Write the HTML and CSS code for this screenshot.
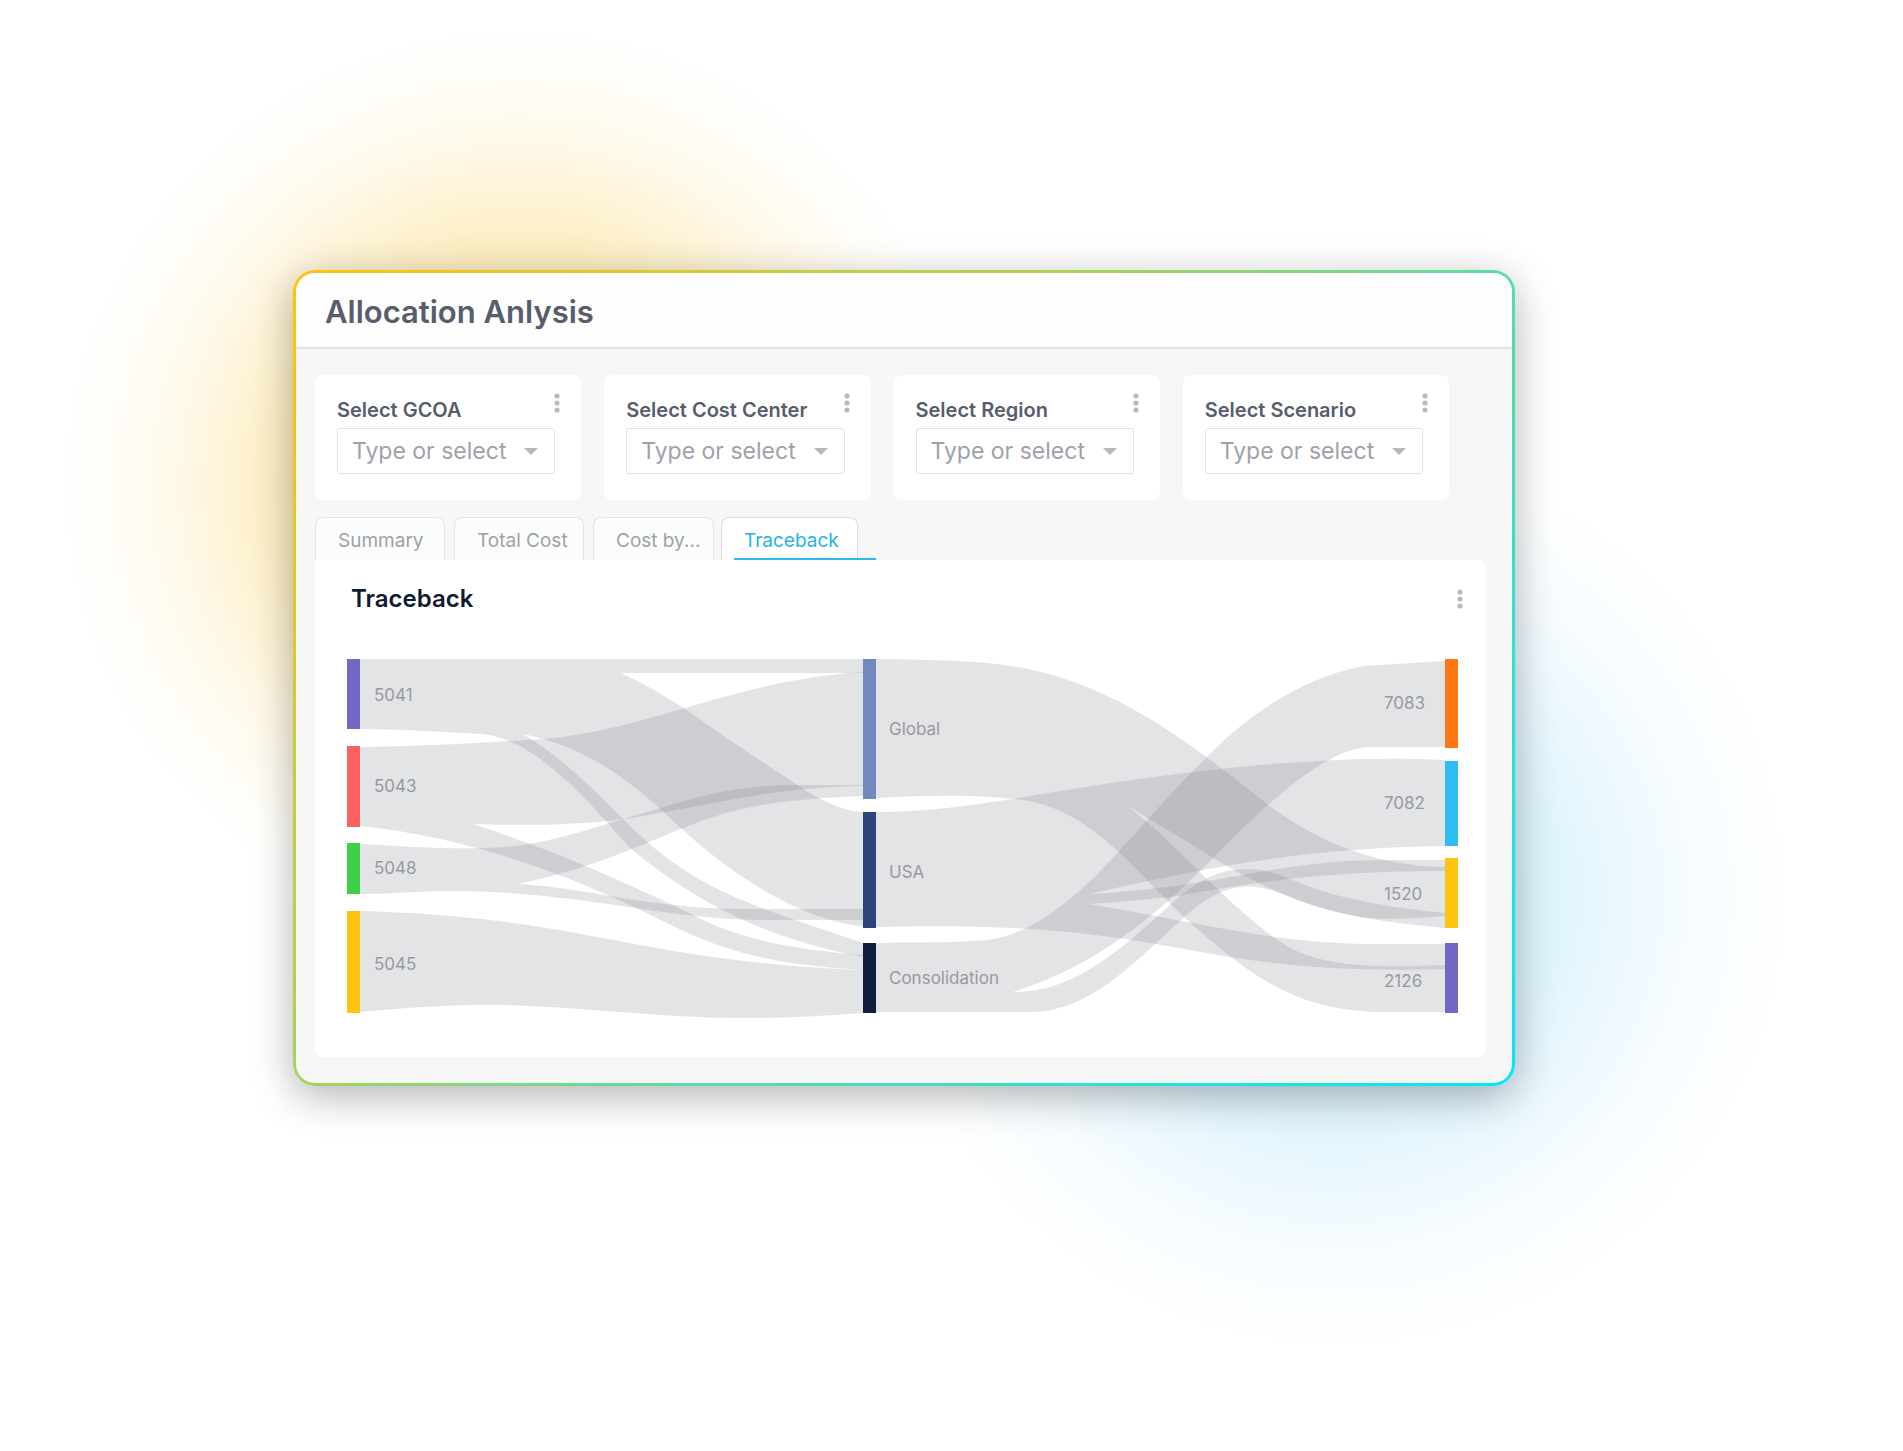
FILE: index.html
```
<!DOCTYPE html>
<html lang="en">
<head>
  <meta charset="UTF-8">
  <meta name="viewport" content="width=device-width, initial-scale=1.0">
  <title>Allocation Anlysis</title>
  <link rel="stylesheet" href="styles.css">
</head>
<body>
  <main class="window">
    <header class="window-header">
      <h1>Allocation Anlysis</h1>
    </header>

    <div class="content">
      <div class="filters">
        <div class="filter">
          <label for="gcoa">Select GCOA</label>
          <div class="select-box">
            <select id="gcoa"><option>Type or select</option></select>
          </div>
          <button class="more" aria-label="GCOA options">
            <svg width="6" height="20" viewBox="0 0 6 20"><circle cx="3" cy="3" r="2.6"/><circle cx="3" cy="10" r="2.6"/><circle cx="3" cy="17" r="2.6"/></svg>
          </button>
        </div>
        <div class="filter">
          <label for="cost-center">Select Cost Center</label>
          <div class="select-box">
            <select id="cost-center"><option>Type or select</option></select>
          </div>
          <button class="more" aria-label="Cost center options">
            <svg width="6" height="20" viewBox="0 0 6 20"><circle cx="3" cy="3" r="2.6"/><circle cx="3" cy="10" r="2.6"/><circle cx="3" cy="17" r="2.6"/></svg>
          </button>
        </div>
        <div class="filter">
          <label for="region">Select Region</label>
          <div class="select-box">
            <select id="region"><option>Type or select</option></select>
          </div>
          <button class="more" aria-label="Region options">
            <svg width="6" height="20" viewBox="0 0 6 20"><circle cx="3" cy="3" r="2.6"/><circle cx="3" cy="10" r="2.6"/><circle cx="3" cy="17" r="2.6"/></svg>
          </button>
        </div>
        <div class="filter">
          <label for="scenario">Select Scenario</label>
          <div class="select-box">
            <select id="scenario"><option>Type or select</option></select>
          </div>
          <button class="more" aria-label="Scenario options">
            <svg width="6" height="20" viewBox="0 0 6 20"><circle cx="3" cy="3" r="2.6"/><circle cx="3" cy="10" r="2.6"/><circle cx="3" cy="17" r="2.6"/></svg>
          </button>
        </div>
      </div>

      <nav class="tabs">
        <button class="tab">Summary</button>
        <button class="tab">Total Cost</button>
        <button class="tab tab-small">Cost by...</button>
        <button class="tab active">Traceback</button>
      </nav>

      <section class="panel">
        <div class="panel-header">
          <h2>Traceback</h2>
          <button class="more" aria-label="Chart options">
            <svg width="6" height="20" viewBox="0 0 6 20"><circle cx="3" cy="3" r="2.6"/><circle cx="3" cy="10" r="2.6"/><circle cx="3" cy="17" r="2.6"/></svg>
          </button>
        </div>

        <svg class="sankey" viewBox="0 0 1111 362" role="img" aria-label="Cost flow between accounts and regions">
          <!-- accounts to regions -->
          <g class="flows">
            <path d="M13 0 H516 V14 H274 C296 24 317 36 338 50 C376 77 414 102 452 127 C475 142 495 152 516 153 V267 C470 264 400 230 336 171 C293 131 250 90 176 75 C199 89 219 105 236 121 C258 141 277 162 299 182 C357 233 412 249 516 284 V298 C451 285 372 263 283 189 C243 144 190 81 136 75 C96 73 50 70 13 70 Z"/>
            <path d="M13 88 C95 87 145 83 198 80 C245 76 293 62 338 49 C390 34 442 18 516 13 V127 C440 128 390 140 313 154 C265 163 220 168 126 165 C190 185 260 215 328 247 C360 262 390 286 516 296 V311 C440 306 390 298 328 268 C265 236 150 181 13 167 Z"/>
            <path d="M13 185 C80 189 110 190 136 189 C195 189 250 167 293 155 C350 138 385 126 450 126 H516 V137 C420 141 385 150 336 169 C283 191 235 212 170 225 C240 228 300 250 400 250 H516 V261 H410 C310 259 230 232 103 232 C70 232 50 235 13 235 Z"/>
            <path d="M13 252 C240 258 285 302 516 311 V354 C400 363 345 358 286 354 C200 348 150 340 13 353 Z"/>
          </g>
          <!-- regions to targets -->
          <g class="flows">
            <path d="M529 0 C600 1 650 2 690 12 C780 34 850 89 920 145 C955 170 1010 206 1098 208 V257 C1060 260 1030 261 1013 258 C980 252 955 243 933 234 C910 224 890 213 866 199 C838 181 810 165 781 147 C835 190 865 231 926 278 C962 304 1000 310 1098 306 V353 H1030 C945 350 900 315 836 257 C790 214 740 144 666 140 C630 136 590 136 529 139 Z"/>
            <path d="M529 153 C575 153 620 147 666 140 C770 122 950 93 1098 101 V187 C960 189 870 206 742 235 C880 227 930 201 1036 201 H1098 V212 C960 212 900 226 823 238 C795 241 770 243 742 245 C860 265 930 285 1030 285 H1098 V310 C960 314 900 301 820 287 C740 272 660 265 529 268 Z"/>
            <path d="M529 284 C570 283 610 284 640 281 C690 276 740 228 773 191 C804 157 830 127 860 98 C905 51 960 18 1016 7 L1098 2 V88 H1020 C975 93 925 140 866 199 C812 254 750 307 666 333 C720 334 765 300 825 244 C845 226 868 210 900 210 C945 210 950 240 1098 254 V269 C1065 266 1035 262 1013 258 C980 252 955 243 933 234 C903 223 878 224 843 253 C790 300 745 353 683 353 H529 Z"/>
          </g>

          <rect x="0" y="0" width="13" height="70" fill="#7367c5"/>
          <rect x="0" y="87" width="13" height="81" fill="#ff6161"/>
          <rect x="0" y="184" width="13" height="51" fill="#3fd04a"/>
          <rect x="0" y="252" width="13" height="102" fill="#fcc30f"/>
          <rect x="516" y="0" width="13" height="140" fill="#718abe"/>
          <rect x="516" y="153" width="13" height="116" fill="#2b447a"/>
          <rect x="516" y="284" width="13" height="70" fill="#101f3e"/>
          <rect x="1098" y="0" width="13" height="89" fill="#ff7715"/>
          <rect x="1098" y="102" width="13" height="85" fill="#2fbcf2"/>
          <rect x="1098" y="199" width="13" height="70" fill="#fcc30f"/>
          <rect x="1098" y="284" width="13" height="70" fill="#7367c5"/>

          <g class="labels">
            <text x="27" y="42">5041</text>
            <text x="27" y="133">5043</text>
            <text x="27" y="215">5048</text>
            <text x="27" y="311">5045</text>
            <text x="542" y="76">Global</text>
            <text x="542" y="219">USA</text>
            <text x="542" y="325">Consolidation</text>
            <text x="1037" y="50">7083</text>
            <text x="1037" y="150">7082</text>
            <text x="1037" y="241">1520</text>
            <text x="1037" y="328">2126</text>
          </g>
        </svg>
      </section>
    </div>
  </main>
</body>
</html>
```

FILE: styles.css
```
* {
  margin: 0;
  padding: 0;
  box-sizing: border-box;
}
body {
  min-height: 100vh;
  padding: 270px 388px 120px 293px;
  font-family: Inter, "Liberation Sans", sans-serif;
  color: #575d6b;
  background:
    radial-gradient(circle 460px at 520px 485px, #fbe7ae 0%, #fcedc0 50%, #fdf2d2 61%, #fff7e4 71%, #fffbf1 82%, #fffefa 92%, rgba(255, 255, 255, 0) 100%),
    radial-gradient(circle 455px at 1335px 895px, #c8edfb 0%, #e1f5fd 51%, #ebf8fe 62%, #f5fbff 76%, #fbfeff 89%, rgba(255, 255, 255, 0) 100%),
    #fff;
}
button {
  border: none;
  background: none;
  font-family: inherit;
  cursor: pointer;
}
.window {
  border: 3px solid transparent;
  border-radius: 22px;
  background:
    linear-gradient(#f7f7f7, #f7f7f7) padding-box,
    linear-gradient(135deg, #ffc20e 0%, #a8d35a 40%, #57dca8 60%, #00e8ff 100%) border-box;
  box-shadow: 0 10px 40px rgba(0, 0, 0, 0.3);
}
.window-header {
  height: 76px;
  padding: 4px 29px 0;
  display: flex;
  align-items: center;
  background: #fefefe;
  border-bottom: 2px solid #dce4f0;
  border-radius: 19px 19px 0 0;
}
.window-header h1 {
  font-size: 31px;
  line-height: 38px;
  font-weight: 600;
}
.content {
  padding: 26px 26px 26px 19px;
}
.filters {
  display: grid;
  grid-template-columns: repeat(4, 1fr);
  gap: 23px;
  margin-right: 37px;
}
.filter {
  position: relative;
  height: 125px;
  padding: 23px 26px 0 22px;
  background: #fff;
  border-radius: 8px;
}
.filter label {
  display: block;
  font-size: 20px;
  line-height: 24px;
  font-weight: 600;
  margin-bottom: 6px;
}
.select-box {
  position: relative;
}
.select-box select {
  display: block;
  width: 100%;
  height: 46px;
  padding: 0 14px;
  appearance: none;
  background: #fff;
  border: 1px solid #dfe2ea;
  border-radius: 3px;
  font-family: inherit;
  font-size: 23px;
  color: #a0a2aa;
}
.select-box::after {
  content: "";
  position: absolute;
  top: 20px;
  right: 17px;
  border: 7px solid transparent;
  border-top-color: #b6b7bf;
  border-bottom: none;
  pointer-events: none;
}
.more {
  display: flex;
}
.more svg {
  fill: #b9babf;
}
.filter .more {
  position: absolute;
  top: 18px;
  right: 21px;
}
.tabs {
  display: flex;
  gap: 9px;
  margin-top: 17px;
}
.tab {
  width: 130px;
  height: 43px;
  padding: 2px 0 0 22px;
  text-align: left;
  white-space: nowrap;
  font-size: 19px;
  color: #9fa1a8;
  background: #fbfcfc;
  border: 1px solid #e5e5e5;
  border-bottom: none;
  border-radius: 8px 8px 0 0;
}
.tab-small {
  width: 121px;
  margin-right: -2px;
}
.tab.active {
  position: relative;
  width: 137px;
  color: #29b2e6;
  background: #fff;
  border-color: #dddddd;
}
.tab.active::after {
  content: "";
  position: absolute;
  left: 12px;
  right: -19px;
  bottom: 0;
  height: 2px;
  background: #2fb8ec;
}
.panel {
  padding: 24px 28px 36px 32px;
  background: #fff;
  border-radius: 0 8px 8px 8px;
}
.panel-header {
  display: flex;
  justify-content: space-between;
  align-items: center;
  margin-bottom: 45px;
}
.panel-header h2 {
  padding-left: 4px;
  font-size: 24px;
  line-height: 30px;
  font-weight: 600;
  color: #101a33;
}
.panel-header .more {
  margin-right: -5px;
}
.sankey {
  display: block;
  width: 100%;
}
.flows path {
  fill: rgba(124, 127, 138, 0.21);
}
.labels text {
  font-size: 17px;
  fill: #9799a1;
}
```
